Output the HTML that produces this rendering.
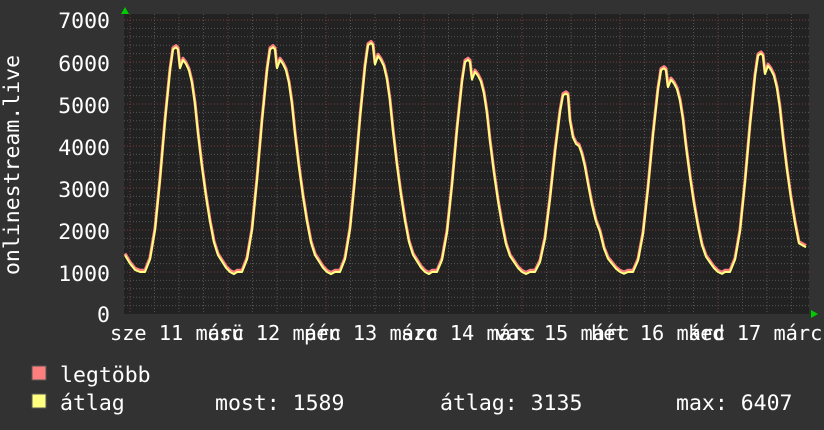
<!DOCTYPE html>
<html><head><meta charset="utf-8"><style>
html,body{margin:0;padding:0;background:#333;width:824px;height:430px;overflow:hidden}
svg text{font-family:"DejaVu Sans Mono","Liberation Mono",monospace;fill:#fff}
</style></head><body>
<svg id="s" width="824" height="430" xmlns="http://www.w3.org/2000/svg">
<rect x="0" y="0" width="824" height="430" fill="#323232"/>
<rect x="124" y="14" width="685" height="300" fill="#222"/>
<g id="grid"></g>
<polyline id="mx" fill="none" stroke="#ff7f7f" stroke-width="3" stroke-linejoin="round"/>
<polyline id="av" fill="none" stroke="#ffff80" stroke-width="2" stroke-linejoin="round"/>
<polygon points="121,14 129,14 125,7" fill="#0c0"/>
<polygon points="811,310 811,318 818,314" fill="#0c0"/>
<g font-size="21.5" text-anchor="end">
<text x="110" y="28">7000</text><text x="110" y="71">6000</text><text x="110" y="113">5000</text>
<text x="110" y="155">4000</text><text x="110" y="197">3000</text><text x="110" y="239">2000</text>
<text x="110" y="281">1000</text><text x="110" y="322">0</text>
</g>
<text x="19" y="165" font-size="21.5" text-anchor="middle" transform="rotate(-90 19 165)">onlinestream.live</text>
<g font-size="20.3" style="white-space:pre">
<text x="110" y="340">sze 11 márc</text>
<text x="207" y="340">csü 12 márc</text>
<text x="304" y="340">pén 13 márc</text>
<text x="401" y="340">szo 14 márc</text>
<text x="495" y="340">vas 15 márc</text>
<text x="591" y="340">hét 16 márc</text>
<text x="688" y="340">ked 17 márc</text>
</g>
<rect x="32" y="366" width="14" height="14" fill="#ff7f7f" stroke="#555"/>
<rect x="32" y="394" width="14" height="14" fill="#ffff80" stroke="#555"/>
<g font-size="21.5" style="white-space:pre">
<text x="60" y="382">legtöbb</text>
<text x="60" y="410">átlag</text>
<text x="215" y="410">most: 1589</text>
<text x="440" y="410">átlag: 3135</text>
<text x="676" y="410">max: 6407</text>
</g>
</svg>
<script>
var g=document.getElementById("grid"),h="";
for(var v=200;v<=7000;v+=200){var y=314-v*0.042;h+='<line x1="124" x2="809" y1="'+y+'" y2="'+y+'" stroke="'+(v%1000==0?'#7a3a3a':'#555')+'" stroke-dasharray="1,2"/>';}
for(var x=130-98;x<809;x+=24.5){if(x<124)continue;var maj=Math.abs(((x-130)/98)-Math.round((x-130)/98))<0.01;h+='<line y1="14" y2="314" x1="'+x+'" x2="'+x+'" stroke="'+(maj?'#7a3a3a':'#555')+'" stroke-dasharray="1,2"/>';}
g.innerHTML=h;
var T=[[0,1000],[5,1000],[10,1300],[15,2000],[20,3200],[25,4600],[30,5800],[33,6300],[36,6350],[38,6300],[40,5850],[43,6050],[46,5950],[49,5800],[52,5500],[55,5000],[58,4300],[62,3500],[66,2800],[70,2200],[74,1700],[78,1400],[82,1250],[86,1100],[90,1000],[94,950],[98,1000]];
var D4={40:4600,43:4200,46:4050,49:4000,52:3800,55:3500,58:3100,62:2600,66:2200};
var peaks=[6350,6350,6450,6050,5250,5850,6200],mins=[140,237,335,432,530,628,725];
var pts=[[125,1400],[130,1200],[135,1050]];
for(var d=0;d<7;d++){var f=(peaks[d]-1000)/5350;
for(var i=0;i<T.length-1;i++){var xx=mins[d]+T[i][0];var val=1000+(T[i][1]-1000)*f;
if(d==4&&D4[T[i][0]]!==undefined)val=D4[T[i][0]];
pts.push([xx,val]);}}
pts=pts.filter(p=>p[0]<=800);
pts.push([806,1589]);
var a=pts.map(p=>p[0]+","+(314-p[1]*0.042).toFixed(1)).join(" ");
var b=pts.map(p=>p[0]+","+(314-(p[1]+40)*0.042).toFixed(1)).join(" ");
document.getElementById("av").setAttribute("points",a);
document.getElementById("mx").setAttribute("points",b);
</script>
</body></html>
